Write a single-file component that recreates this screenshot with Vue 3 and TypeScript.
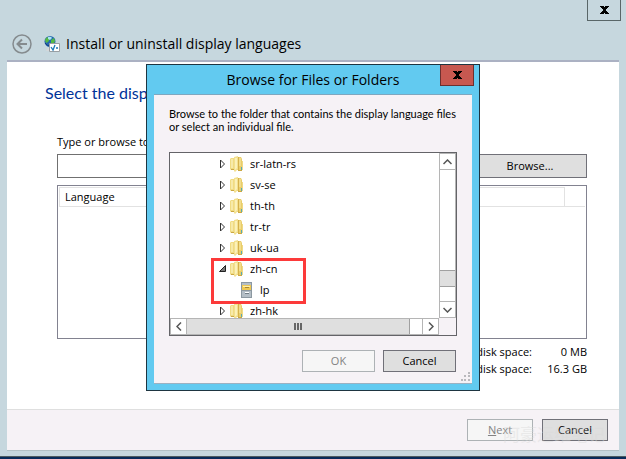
<script setup lang="ts">
import { ref } from 'vue'

interface TreeItem {
  name: string
  kind: 'folder' | 'cabinet'
  open?: boolean
}

const items: TreeItem[] = [
  { name: 'sr-latn-rs', kind: 'folder' },
  { name: 'sv-se', kind: 'folder' },
  { name: 'th-th', kind: 'folder' },
  { name: 'tr-tr', kind: 'folder' },
  { name: 'uk-ua', kind: 'folder' },
  { name: 'zh-cn', kind: 'folder', open: true },
  { name: 'lp', kind: 'cabinet' },
  { name: 'zh-hk', kind: 'folder' },
]

const path = ref('')
</script>

<template>
  <div class="window">
    <header class="caption">
      <button class="close" aria-label="Close window">
        <svg width="9" height="8" viewBox="0 0 9 8" shape-rendering="crispEdges">
          <path d="M0 0h4v1h1V0h4v1H8v1H7v1H6v2h1v1h1v1h1v1H5V7H4v1H0V7h1V6h1V5h1V3H2V2H1V1H0z" />
        </svg>
      </button>
    </header>
    <div class="title-row">
      <button class="back" aria-label="Back">
        <svg width="20" height="20" viewBox="0 0 20 20" fill="none" stroke="#858b8e">
          <circle cx="10" cy="10" r="9" stroke-width="1.5" />
          <path d="M15 10H6M10 5.5L5.5 10l4.500 4.500" stroke-width="2" />
        </svg>
      </button>
      <svg class="globe" width="16" height="16" viewBox="0 0 16 16">
        <path d="M3 13l3-2 2 4H2z" fill="#d5d8da" />
        <circle cx="6" cy="5.500" r="5.500" fill="#2468ae" />
        <path d="M1 4Q2 1 5 1l1 2-2 3-2 1zM7 4l3-2 1 3-2 4-2-2z" fill="#55b944" />
        <path d="M4 1q3-1 4 1L6 4 4 3z" fill="#a9e4f2" />
        <path d="M1 7q2 3 5 3" stroke="#163d83" fill="none" />
        <path d="M5.500 7.500h10v8h-10z" fill="#fff" stroke="#9a9fa3" />
        <path d="M7 11l2 3 2-5M12 12h2" fill="none" stroke="#1c78b8" stroke-width="1.300" />
      </svg>
      <h1>Install or uninstall display languages</h1>
    </div>

    <main class="page">
      <section class="body">
        <h2>Select the display languages to install</h2>
        <label class="field-label" for="path">Type or browse to the display language files</label>
        <div class="path-row">
          <input id="path" v-model="path" type="text" />
          <button class="btn browse">Browse...</button>
        </div>
        <div class="list">
          <table>
            <thead>
              <tr><th>Language</th><th class="spare"></th></tr>
            </thead>
          </table>
        </div>
        <dl class="space">
          <dt>Required disk space:</dt><dd>0 MB</dd>
          <dt>Free disk space:</dt><dd>16.3 GB</dd>
        </dl>
      </section>
      <footer class="actions">
        <button class="btn muted" disabled><u>N</u>ext</button>
        <button class="btn">Cancel</button>
        <span class="mark">阿豪运维笔记</span>
      </footer>
    </main>
    <div class="desktop"></div>

    <div class="overlay">
      <div class="dialog" role="dialog" aria-labelledby="dialog-title">
        <div class="dialog-head">
          <h3 id="dialog-title">Browse for Files or Folders</h3>
          <button class="close red" aria-label="Close dialog">
            <svg width="9" height="8" viewBox="0 0 9 8" shape-rendering="crispEdges">
              <path d="M0 0h4v1h1V0h4v1H8v1H7v1H6v2h1v1h1v1h1v1H5V7H4v1H0V7h1V6h1V5h1V3H2V2H1V1H0z" />
            </svg>
          </button>
        </div>
        <div class="dialog-body">
          <p>Browse to the folder that contains the display language files<br />or select an individual file.</p>
          <div class="tree">
            <ul>
              <li v-for="item in items" :key="item.name" :class="item.kind">
                <svg v-if="item.kind === 'folder'" class="arrow" width="7" height="10" viewBox="0 0 7 10">
                  <path v-if="item.open" d="M6.500 1.500v6h-6z" fill="#777" stroke="#222" />
                  <path v-else d="M1.500 1v8l4-4z" fill="#fff" stroke="#333" />
                </svg>
                <svg v-if="item.kind === 'folder'" width="14" height="16" viewBox="0 0 14 16">
                  <path d="M0 3l1-1h4v12H1l-1-1z" fill="#f0db83" />
                  <path d="M1 3h2v9H1z" fill="#f7eaa9" />
                  <path d="M7 1h4l1 2v11H7z" fill="#e9cd6a" />
                  <path d="M9 2h2v8H9z" fill="#f2dd8b" />
                  <path d="M4 1l4-1v13l-3 3-1-1z" fill="#f3e08f" />
                  <path d="M5 2h2v10l-2 2z" fill="#fbf1b9" />
                  <path d="M8 1h1v13H8z" fill="#d5b14b" />
                  <path d="M12 5h1v9h-1z" fill="#eed987" />
                  <path d="M11 11h1v3h-1z" fill="#55a9b8" />
                  <path d="M1 13h3v1H1zM8 14h4v1H8z" fill="#cba844" />
                </svg>
                <svg v-else width="11" height="16" viewBox="0 0 11 16">
                  <path d="M0 0h11v16H0z" fill="#8c98a1" />
                  <path d="M1 1h9v7H1zM1 9h9v6H1z" fill="#b4bec6" />
                  <path d="M1 3h9v5H1z" fill="#efc852" />
                  <path d="M2 4h7v1H2z" fill="#fff0a8" />
                  <path d="M4 5h4v1H4z" fill="#a48837" />
                  <path d="M4 10h4v1H4z" fill="#fff" />
                  <path d="M4 11h4v1H4z" fill="#717d86" />
                </svg>
                <span>{{ item.name }}</span>
              </li>
            </ul>
            <div class="vbar">
              <button aria-label="Scroll up">
                <svg width="9" height="6" viewBox="0 0 9 6"><path d="M.5 5l4-4 4 4" /></svg>
              </button>
              <div class="vthumb"></div>
              <button aria-label="Scroll down">
                <svg width="9" height="6" viewBox="0 0 9 6"><path d="M.5 1l4 4 4-4" /></svg>
              </button>
            </div>
            <div class="hbar">
              <button aria-label="Scroll left">
                <svg width="6" height="9" viewBox="0 0 6 9"><path d="M5 .5l-4 4 4 4" /></svg>
              </button>
              <div class="hthumb"><i></i><i></i><i></i></div>
              <button aria-label="Scroll right">
                <svg width="6" height="9" viewBox="0 0 6 9"><path d="M1 .5l4 4-4 4" /></svg>
              </button>
            </div>
            <div class="highlight"></div>
          </div>
          <div class="dialog-actions">
            <button class="btn muted" disabled>OK</button>
            <button class="btn">Cancel</button>
          </div>
          <svg class="grip" width="9" height="9" viewBox="0 0 9 9" fill="#b9b9bd">
            <path d="M7 0h2v2H7zM7 3h2v2H7zM3 3h2v2H3zM7 7h2v2H7zM3 7h2v2H3zM0 7h2v2H0z" />
          </svg>
        </div>
      </div>
    </div>
  </div>
</template>

<style>
body {
  margin: 0;
}
</style>

<style scoped>
* {
  box-sizing: border-box;
}
.window {
  position: relative;
  display: flex;
  flex-direction: column;
  min-height: 100vh;
  overflow: hidden;
  background: #c6d7de;
  color: #000;
  font: 11px/16px "Open Sans", "Noto Sans", sans-serif;
}
h1, h2, h3, p, ul, dl, dd {
  margin: 0;
  padding: 0;
  font-weight: 400;
}
button {
  padding: 0;
  font: inherit;
  color: inherit;
}
.caption {
  display: flex;
  justify-content: flex-end;
  padding-right: 5px;
}
.close {
  display: flex;
  align-items: center;
  justify-content: center;
  width: 34px;
  height: 21px;
  border: 1px solid #596668;
  border-top: 0;
  background: transparent;
}
.title-row {
  display: flex;
  align-items: center;
  height: 39px;
  padding: 6px 12px 0;
}
.back {
  width: 20px;
  height: 20px;
  border: 0;
  background: none;
}
.back svg, .globe {
  display: block;
}
.globe {
  margin: 0 6px 0 12px;
}
h1 {
  font-size: 14px;
  line-height: 20px;
}
.page {
  display: flex;
  flex: 1;
  flex-direction: column;
  margin: 0 7px;
  border-top: 2px solid #abb1c3;
  border-bottom: 1px solid #b2c1c6;
  background: #fff;
}
.body {
  display: flex;
  flex: 1;
  flex-direction: column;
  padding: 19px 32px 0 50px;
}
h2 {
  margin-left: -12px;
  color: #003399;
  font-family: Lato, "Open Sans", sans-serif;
  font-size: 16px;
  line-height: 24px;
}
.field-label {
  margin: 29px 0 4px;
}
.path-row {
  display: flex;
  gap: 8px;
}
.path-row input {
  flex: 1;
  min-width: 0;
  height: 24px;
  padding: 0 4px;
  border: 1px solid #707070;
  font: inherit;
}
.btn {
  display: flex;
  align-items: center;
  justify-content: center;
  height: 22px;
  border: 1px solid #707078;
  background: #dfdfdf;
}
.btn.muted {
  border-color: #adb2b5;
  background: #f6f6f6;
  color: #838383;
}
.browse {
  width: 114px;
  height: 24px;
}
.list {
  height: 154px;
  margin-top: 7px;
  padding: 1px;
  border: 1px solid #828290;
}
table {
  width: 100%;
  border-collapse: collapse;
}
th {
  height: 19px;
  padding: 0 5px;
  border: 1px solid #e2e2e2;
  font-weight: 400;
  text-align: left;
}
.spare {
  width: 21px;
  border-top: 0;
  border-right: 0;
}
.space {
  display: grid;
  grid-template-columns: auto 40px;
  column-gap: 15px;
  justify-content: end;
  margin: 4px 0;
  line-height: 17px;
}
.space dt, .space dd {
  text-align: right;
}
.actions {
  position: relative;
  display: flex;
  justify-content: flex-end;
  gap: 9px;
  padding: 9px 11px;
  border-top: 1px solid #dfdfdf;
  background: #f6f2f6;
}
.actions .btn {
  width: 66px;
}
.mark {
  position: absolute;
  right: 14px;
  bottom: 7px;
  color: #d8d8d8;
  font: 17px/18px "Noto Sans CJK SC", sans-serif;
  opacity: 0.4;
  pointer-events: none;
}
.desktop {
  height: 3px;
  margin-top: 5px;
  border-top: 1px solid #4d5b60;
  background: #082a58;
}
.overlay {
  position: absolute;
  inset: 64px 0 auto;
  display: flex;
  justify-content: center;
}
.dialog {
  width: 334px;
  border: 1px solid #1e3541;
  background: #62caf0;
}
.dialog-head {
  position: relative;
  height: 29px;
}
h3 {
  font-size: 14px;
  line-height: 30px;
  text-align: center;
}
.red {
  position: absolute;
  top: 0;
  right: 5px;
  border-color: #6c302f;
  background: #c75850;
}
.dialog-body {
  position: relative;
  margin: 0 7px 6px;
  padding: 12px 15px 11px;
  border-top: 1px solid #7fa7bf;
  border-bottom: 1px solid #9bb1c2;
  background: #f6f2f6;
}
p {
  font-family: Lato, "Liberation Sans", sans-serif;
  line-height: 13px;
  white-space: nowrap;
}
.tree {
  position: relative;
  display: grid;
  grid-template: 165px 17px / 1fr 17px;
  margin-top: 19px;
  border: 1px solid #646468;
}
ul {
  overflow: hidden;
  background: #fff;
  list-style: none;
}
li {
  display: flex;
  align-items: center;
  height: 21px;
  padding-left: 49px;
}
li span {
  margin-left: 6px;
}
.arrow {
  margin-right: 4px;
}
.cabinet {
  padding-left: 71px;
}
.cabinet span {
  margin-left: 8px;
}
.vbar, .hbar {
  display: flex;
  justify-content: space-between;
  background: #fff;
}
.vbar {
  flex-direction: column;
  border: solid #b5b5b5;
  border-width: 0 1px;
}
.hbar {
  border: solid #b5b5b5;
  border-width: 1px 0;
}
.vbar button, .hbar button {
  display: flex;
  align-items: center;
  justify-content: center;
  border: 0 solid #b5b5b5;
  background: #fff;
}
.vbar button {
  height: 17px;
  border-width: 1px 0;
}
.hbar button {
  width: 17px;
  border-width: 0 1px;
}
.vbar path, .hbar path {
  fill: none;
  stroke: #555;
  stroke-width: 1.5;
}
.vthumb {
  height: 17px;
  margin-top: 83px;
  margin-bottom: -3px;
  border: solid #a0a0a0;
  border-width: 1px 0;
  background: #dfdfdf;
}
.hthumb {
  display: flex;
  flex: 1;
  align-items: center;
  justify-content: center;
  gap: 1px;
  margin-right: 12px;
  border-right: 1px solid #a0a0a0;
  background: #dfdfdf;
}
.hthumb i {
  width: 2px;
  height: 7px;
  background: #666;
}
.vbar .vthumb {
  margin: 86px 0 0;
}
.highlight {
  position: absolute;
  top: 105px;
  left: 41px;
  width: 95px;
  height: 46px;
  border: 3px solid #fc3a3a;
}
.dialog-actions {
  display: flex;
  justify-content: flex-end;
  gap: 8px;
  margin-top: 14px;
  padding-right: 1px;
}
.dialog-actions .btn {
  width: 73px;
}
.grip {
  position: absolute;
  right: 2px;
  bottom: 2px;
}
</style>
